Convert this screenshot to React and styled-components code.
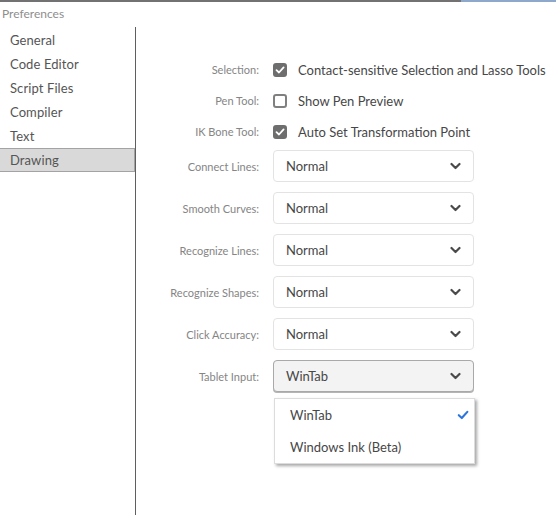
import React from 'react'
import styled, { createGlobalStyle } from 'styled-components'

const GlobalStyle = createGlobalStyle`
  html, body {
    margin: 0;
    padding: 0;
    background: #fff;
  }
  body {
    font-family: Lato, "Noto Sans", sans-serif;
  }
  #root {
    height: 100vh;
  }
`

const Window = styled.div`
  height: 100%;
  display: flex;
  flex-direction: column;
`

const TopEdge = styled.div`
  display: flex;
  height: 2px;
  flex-shrink: 0;
`

const EdgePart = styled.div`
  background: ${p => p.color};
  width: ${p => (p.w ? p.w + 'px' : 'auto')};
  flex: ${p => (p.w ? 'none' : 1)};
`

const Title = styled.div`
  height: 25px;
  line-height: 24px;
  padding-left: 2px;
  font-size: 12px;
  color: #8e8e8e;
  flex-shrink: 0;
`

const Body = styled.div`
  flex: 1;
  display: flex;
  min-height: 0;
`

const Sidebar = styled.nav`
  width: 135px;
  border-right: 1px solid #5f5f5f;
  display: flex;
  flex-direction: column;
  padding-top: 1px;
`

const NavItem = styled.div`
  box-sizing: border-box;
  height: 24px;
  line-height: 22px;
  padding-left: 10px;
  font-size: 13px;
  color: #555;
  letter-spacing: 0.1px;
  border: 1px solid ${p => (p.active ? '#a3a3a3' : 'transparent')};
  border-left: none;
  background: ${p => (p.active ? '#d9d9d9' : 'transparent')};
`

const Content = styled.div`
  flex: 1;
  padding-top: 27px;
  display: flex;
  flex-direction: column;
`

const CheckGrid = styled.div`
  display: grid;
  grid-template-columns: 123px 201px;
  grid-auto-rows: 31px;
  column-gap: 14px;
  align-items: center;
`

const SelectGrid = styled(CheckGrid)`
  grid-auto-rows: 32px;
  row-gap: 10px;
  margin-top: 3px;
`

const Label = styled.div`
  text-align: right;
  font-size: 11px;
  color: #858585;
  white-space: nowrap;
`

const CheckRow = styled.label`
  display: flex;
  align-items: center;
  gap: 11px;
  font-size: 13px;
  color: #474747;
  white-space: nowrap;
`

const Box = styled.span`
  box-sizing: border-box;
  width: 14px;
  height: 14px;
  border-radius: 3px;
  background: ${p => (p.checked ? '#6e6e6e' : '#fff')};
  border: 2px solid ${p => (p.checked ? '#6e6e6e' : '#808080')};
  display: flex;
  align-items: center;
  justify-content: center;
`

const SelectWrap = styled.div`
  position: relative;
  height: 32px;
`

const Select = styled.div`
  box-sizing: border-box;
  height: 32px;
  border-radius: 4px;
  border: 1px solid ${p => (p.open ? '#a9a9a9' : '#e3e3e3')};
  background: ${p => (p.open ? '#f3f3f3' : '#fff')};
  box-shadow: ${p => (p.open ? '0 1px 0 #b5b5b5' : 'none')};
  display: flex;
  align-items: center;
  justify-content: space-between;
  padding: 0 12px;
  font-size: 13px;
  color: #474747;
`

const Menu = styled.div`
  position: absolute;
  top: 38px;
  left: 1px;
  width: 201px;
  box-sizing: border-box;
  background: #fff;
  border: 1px solid #dcdcdc;
  box-shadow: 2px 2px 3px rgba(0, 0, 0, 0.35);
  z-index: 2;
`

const MenuItem = styled.div`
  height: 32px;
  display: flex;
  align-items: center;
  justify-content: space-between;
  padding: 0 5px 0 15px;
  font-size: 13px;
  color: #474747;
`

const Check = ({ color = '#fff', size = 10 }) => (
  <svg width={size} height={size} viewBox="0 0 10 10">
    <path d="M1.5 5.2 L4 7.5 L8.6 2.4" fill="none" stroke={color} strokeWidth="1.8" strokeLinecap="round" strokeLinejoin="round" />
  </svg>
)

const Chevron = () => (
  <svg width="11" height="8" viewBox="0 0 11 8">
    <path d="M1.5 2 L5.5 6 L9.5 2" fill="none" stroke="#4a4a4a" strokeWidth="2.2" strokeLinecap="round" strokeLinejoin="round" />
  </svg>
)

const navItems = ['General', 'Code Editor', 'Script Files', 'Compiler', 'Text', 'Drawing']

const checks = [
  { label: 'Selection:', text: 'Contact-sensitive Selection and Lasso Tools', checked: true },
  { label: 'Pen Tool:', text: 'Show Pen Preview', checked: false },
  { label: 'IK Bone Tool:', text: 'Auto Set Transformation Point', checked: true },
]

const selects = [
  { label: 'Connect Lines:', value: 'Normal' },
  { label: 'Smooth Curves:', value: 'Normal' },
  { label: 'Recognize Lines:', value: 'Normal' },
  { label: 'Recognize Shapes:', value: 'Normal' },
  { label: 'Click Accuracy:', value: 'Normal' },
  { label: 'Tablet Input:', value: 'WinTab', open: true },
]

export default function App() {
  return (
    <Window>
      <GlobalStyle />
      <TopEdge>
        <EdgePart color="#727272" />
        <EdgePart color="#8ea8cb" w={95} />
      </TopEdge>
      <Title>Preferences</Title>
      <Body>
        <Sidebar>
          {navItems.map(n => (
            <NavItem key={n} active={n === 'Drawing'}>{n}</NavItem>
          ))}
        </Sidebar>
        <Content>
          <CheckGrid>
            {checks.map(c => (
              <React.Fragment key={c.label}>
                <Label>{c.label}</Label>
                <CheckRow>
                  <Box checked={c.checked}>{c.checked && <Check />}</Box>
                  {c.text}
                </CheckRow>
              </React.Fragment>
            ))}
          </CheckGrid>
          <SelectGrid>
            {selects.map(s => (
              <React.Fragment key={s.label}>
                <Label>{s.label}</Label>
                <SelectWrap>
                  <Select open={s.open}>
                    {s.value}
                    <Chevron />
                  </Select>
                  {s.open && (
                    <Menu>
                      <MenuItem>
                        WinTab
                        <Check color="#2a76dc" size={12} />
                      </MenuItem>
                      <MenuItem>Windows Ink (Beta)</MenuItem>
                    </Menu>
                  )}
                </SelectWrap>
              </React.Fragment>
            ))}
          </SelectGrid>
        </Content>
      </Body>
    </Window>
  )
}
